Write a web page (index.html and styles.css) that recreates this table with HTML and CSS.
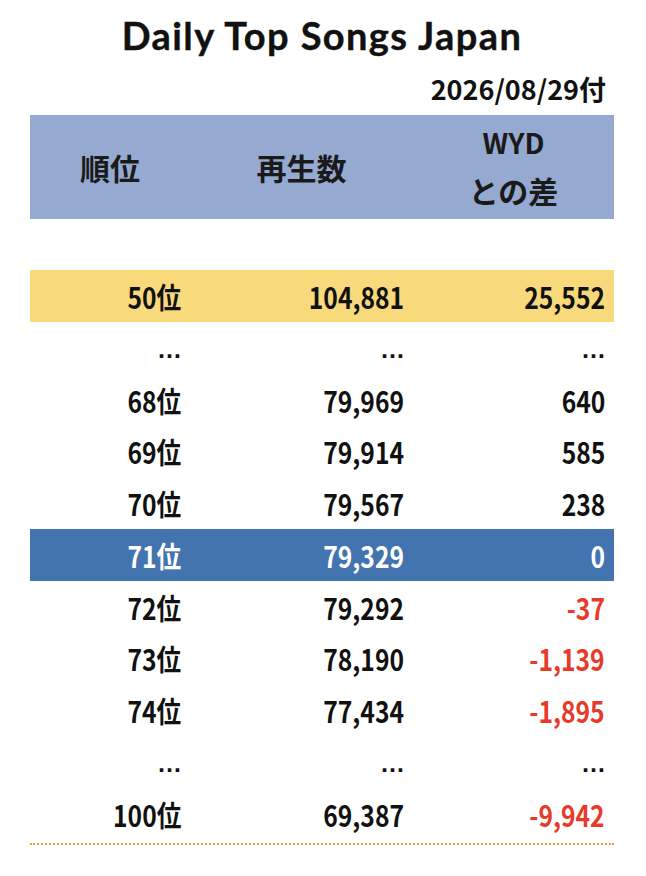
FILE: index.html
```html
<!DOCTYPE html>
<html lang="ja">
<head>
<meta charset="utf-8">
<title>Daily Top Songs Japan</title>
<link rel="stylesheet" href="styles.css">
</head>
<body>
<div class="page">
  <h1 class="title">Daily Top Songs Japan</h1>
  <div class="date">2026/08/29付</div>
  <div class="table">
    <div class="hcell h-rank">順位</div>
    <div class="hcell h-plays">再生数</div>
    <div class="hcell h-diff1">WYD</div>
    <div class="hcell h-diff2">との差</div>

    <div class="cell blank"></div><div class="cell blank"></div><div class="cell blank"></div>

    <div class="cell yellow"><span class="t">50位</span></div><div class="cell yellow"><span class="t">104,881</span></div><div class="cell yellow"><span class="t">25,552</span></div>
    <div class="cell dots">…</div><div class="cell dots">…</div><div class="cell dots">…</div>
    <div class="cell"><span class="t">68位</span></div><div class="cell"><span class="t">79,969</span></div><div class="cell"><span class="t">640</span></div>
    <div class="cell"><span class="t">69位</span></div><div class="cell"><span class="t">79,914</span></div><div class="cell"><span class="t">585</span></div>
    <div class="cell"><span class="t">70位</span></div><div class="cell"><span class="t">79,567</span></div><div class="cell"><span class="t">238</span></div>
    <div class="cell blue"><span class="t">71位</span></div><div class="cell blue"><span class="t">79,329</span></div><div class="cell blue"><span class="t">0</span></div>
    <div class="cell"><span class="t">72位</span></div><div class="cell"><span class="t">79,292</span></div><div class="cell neg"><span class="t">-37</span></div>
    <div class="cell"><span class="t">73位</span></div><div class="cell"><span class="t">78,190</span></div><div class="cell neg"><span class="t">-1,139</span></div>
    <div class="cell"><span class="t">74位</span></div><div class="cell"><span class="t">77,434</span></div><div class="cell neg"><span class="t">-1,895</span></div>
    <div class="cell dots">…</div><div class="cell dots">…</div><div class="cell dots">…</div>
    <div class="cell"><span class="t">100位</span></div><div class="cell"><span class="t">69,387</span></div><div class="cell neg"><span class="t">-9,942</span></div>
  </div>
  <div class="rule"></div>
</div>
</body>
</html>
```

FILE: styles.css
```css
html, body {
  margin: 0;
  padding: 0;
  background: #ffffff;
}
.page {
  width: 584px;
  margin-left: 30px;
  color: #111111;
  font-family: "Noto Sans CJK JP", sans-serif;
  font-weight: 700;
}
.title {
  margin: 0;
  padding-top: 10px;
  height: 52px;
  text-align: center;
  font-family: "Lato", "Noto Sans CJK JP", sans-serif;
  font-weight: 700;
  font-size: 38px;
  line-height: 50px;
  letter-spacing: 1.4px;
  -webkit-text-stroke: 0.4px #111111;
}
.date {
  height: 53px;
  display: flex;
  justify-content: flex-end;
  align-items: center;
  padding-right: 8px;
  font-size: 27px;
}
.table {
  display: grid;
  grid-template-columns: 160px 223px 201px;
  grid-auto-rows: 51.75px;
}
.hcell {
  background: #95a9d1;
  display: flex;
  align-items: center;
  justify-content: center;
  font-size: 30px;
  font-weight: 700;
  color: #1a1a1a;
}
.h-rank { grid-column: 1; grid-row: 1 / span 2; }
.h-plays { grid-column: 2; grid-row: 1 / span 2; }
.h-diff1 { grid-column: 3; grid-row: 1; padding-top: 2px; font-size: 28px; }
.h-diff2 { grid-column: 3; grid-row: 2; padding-bottom: 6px; }
.cell {
  display: flex;
  align-items: center;
  justify-content: flex-end;
  padding-right: 9px;
  font-size: 29px;
}
.t {
  display: inline-block;
  transform: scaleX(0.85);
  transform-origin: right center;
}
.yellow { background: #f8d97b; }
.blue { background: #4374af; color: #ffffff; }
.neg { color: #e83a2b; }
.dots {
  font-family: "Liberation Sans", sans-serif;
  font-size: 25px;
  padding-top: 3px;
  padding-right: 8px;
}
.rule {
  margin-top: 3px;
  border-top: 2px dotted #dea032;
}
```
